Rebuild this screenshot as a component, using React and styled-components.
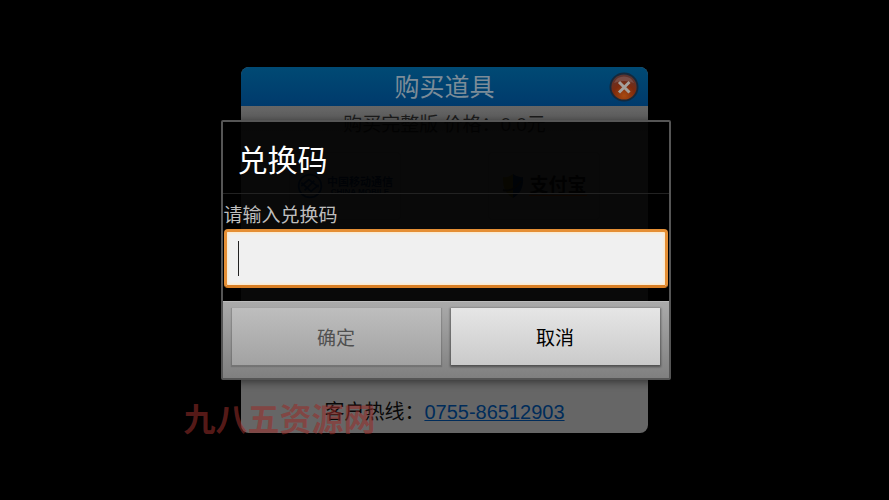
import styled, { createGlobalStyle } from "styled-components";

const App = () => (
  <>
    <GlobalStyle />
    <Screen>
      <Shop>
        <ShopHeader>
          <h1>购买道具</h1>
          <CloseButton type="button" aria-label="关闭">
            <svg viewBox="0 0 30 30" aria-hidden="true">
              <defs>
                <radialGradient id="close-fill" cx="50%" cy="85%" r="80%">
                  <stop offset="0" stopColor="#a84a10" />
                  <stop offset="0.55" stopColor="#7c2a0e" />
                  <stop offset="1" stopColor="#5c3430" />
                </radialGradient>
              </defs>
              <circle cx="15" cy="15" r="14.5" fill="#15293c" />
              <circle cx="15" cy="15" r="12.6" fill="url(#close-fill)" />
              <path d="M5 11a11 11 0 0 1 20 0q-10-4-20 0z" fill="#8c6a68" opacity=".5" />
              <path
                d="M10 10l10.5 10.5M20.5 10l-10.5 10.5"
                stroke="#a4a09c"
                strokeWidth="3"
              />
            </svg>
          </CloseButton>
        </ShopHeader>
        <ShopBody>
          <Price>购买完整版 价格：0.0元</Price>
          <PayMethods>
            <PayButton type="button">
              <svg width="26" height="26" viewBox="0 0 24 24" aria-hidden="true">
                <g fill="none" stroke="#002a5c" strokeWidth="1.6">
                  <circle cx="12" cy="12" r="10.5" />
                  <path d="M4 12l7-6 9 7M4 9l9 8 7-6M7 16l9-9" />
                </g>
              </svg>
              <PayName>
                中国移动通信
                <small>CHINA MOBILE</small>
              </PayName>
            </PayButton>
            <PayButton type="button" $large>
              <svg width="24" height="26" viewBox="0 0 24 26" aria-hidden="true">
                <path d="M12 1q-5 4-10 3-1 15 10 21z" fill="#5a5010" />
                <path d="M12 1q5 4 10 3 1 15-10 21z" fill="#00204c" />
                <path d="M2 17q9 3 18-9" fill="none" stroke="#222" strokeWidth="2" />
              </svg>
              <PayName $underlined>支付宝</PayName>
            </PayButton>
          </PayMethods>
        </ShopBody>
        <Hotline>
          客户热线：<a href="tel:0755-86512903">0755-86512903</a>
        </Hotline>
      </Shop>

      <Watermark>九八五资源网</Watermark>

      <Dialog role="dialog" aria-labelledby="dialog-title">
        <DialogTitle id="dialog-title">兑换码</DialogTitle>
        <DialogContent>
          <label htmlFor="code">请输入兑换码</label>
          <InputFrame>
            <Caret />
            <input id="code" type="text" autoComplete="off" />
          </InputFrame>
        </DialogContent>
        <Actions>
          <ActionButton type="button" disabled>
            确定
          </ActionButton>
          <ActionButton type="button">取消</ActionButton>
        </Actions>
      </Dialog>
    </Screen>
  </>
);

export default App;

const GlobalStyle = createGlobalStyle`
  * {
    box-sizing: border-box;
  }

  body {
    margin: 0;
    background: #000;
    font-family: "Liberation Sans", "Noto Sans CJK SC", sans-serif;
  }

  h1, h2, p {
    margin: 0;
    font-weight: 400;
  }

  button, input {
    font-family: inherit;
  }
`;

const Screen = styled.main`
  display: grid;
  grid-template-columns: minmax(0, 1fr);
  place-items: center;
  min-height: 100vh;
  overflow: hidden;

  > * {
    grid-area: 1 / 1;
  }
`;

const Shop = styled.section`
  display: flex;
  flex-direction: column;
  width: 100%;
  max-width: 407px;
  min-height: 366px;
  border-radius: 8px;
  background: #666;
  overflow: hidden;
`;

const ShopHeader = styled.header`
  display: grid;
  grid-template-columns: 30px 1fr 30px;
  align-items: center;
  height: 39px;
  padding: 0 9px;
  background: linear-gradient(#004a74, #003a6c);

  h1 {
    grid-column: 2;
    padding-top: 2px;
    color: #7c8c98;
    font-size: 25px;
    line-height: 37px;
    text-align: center;
  }
`;

const CloseButton = styled.button`
  display: flex;
  padding: 0;
  border: 0;
  background: none;

  svg {
    width: 30px;
    height: 30px;
  }
`;

const ShopBody = styled.div`
  flex: 1;
  padding: 5px 48px;
  background: linear-gradient(#666, #5c5c5c 16px, #666 40px);
`;

const Price = styled.p`
  color: #1c1c1c;
  font-size: 19px;
  line-height: 28px;
  text-align: center;
`;

const PayMethods = styled.div`
  display: flex;
  justify-content: space-between;
  padding-top: 13px;
`;

const PayButton = styled.button`
  display: flex;
  align-items: center;
  justify-content: center;
  gap: 4px;
  width: 112px;
  height: 68px;
  padding: 0;
  border: 1px solid #5a5a5a;
  border-radius: 4px;
  background: #646464;
  color: ${({ $large }) => ($large ? "#111" : "#001c44")};
  font-size: ${({ $large }) => ($large ? "19px" : "11px")};
  font-weight: 700;
`;

const PayName = styled.span`
  border-bottom: ${({ $underlined }) => ($underlined ? "1px solid #a04000" : "0")};
  line-height: 1;

  small {
    display: block;
    font-size: 8px;
  }
`;

const Hotline = styled.p`
  padding-bottom: 7px;
  color: #080808;
  font-size: 20px;
  line-height: 28px;
  text-align: center;

  a {
    color: #002c5a;
    text-decoration-thickness: 1px;
  }
`;

const Watermark = styled.div`
  margin: 340px 330px 0 0;
  color: rgba(150, 46, 42, 0.58);
  font-size: 32px;
  font-weight: 700;
  line-height: 32px;
  white-space: nowrap;
`;

const Dialog = styled.section`
  width: 100%;
  max-width: 450px;
  margin-left: 2px;
  border: 2px solid #555;
  border-radius: 2px;
  background: rgba(0, 0, 0, 0.91);
  box-shadow: 0 2px 8px rgba(0, 0, 0, 0.5);
  z-index: 1;
`;

const DialogTitle = styled.h2`
  padding: 16px 15px 9px;
  border-bottom: 1px solid #222;
  color: #fff;
  font-size: 30px;
  line-height: 46px;
`;

const DialogContent = styled.div`
  padding: 8px 1px 13px;

  label {
    display: block;
    color: #bebebe;
    font-size: 19px;
    line-height: 27px;
  }
`;

const InputFrame = styled.div`
  display: flex;
  align-items: center;
  height: 59px;
  padding: 0 11px;
  border: 3px solid #e58f35;
  border-bottom-color: #d97f25;
  border-radius: 4px;
  background: #f0f0f0;
  box-shadow: inset 0 0 3px 1px #ffe7c2;

  input {
    flex: 1;
    min-width: 0;
    height: 40px;
    padding: 0;
    border: 0;
    outline: 0;
    background: transparent;
    font-size: 20px;
  }
`;

const Caret = styled.span`
  width: 1px;
  height: 35px;
  background: #222;
`;

const Actions = styled.div`
  display: grid;
  grid-template-columns: 1fr 1fr;
  gap: 10px;
  padding: 6px 9px 13px;
  border-top: 1px solid #bbb;
  background: linear-gradient(#aaa, #808080);
`;

const ActionButton = styled.button`
  height: 57px;
  padding: 0;
  border: 0;
  background: linear-gradient(#e6e6e6, #cacaca);
  box-shadow: 0 1px 2px 1px rgba(0, 0, 0, 0.4);
  color: #000;
  font-size: 19px;

  &:disabled {
    background: linear-gradient(#bebebe, #a2a2a2);
    box-shadow: 0 1px 1px 1px rgba(0, 0, 0, 0.14);
    color: #505050;
  }
`;
